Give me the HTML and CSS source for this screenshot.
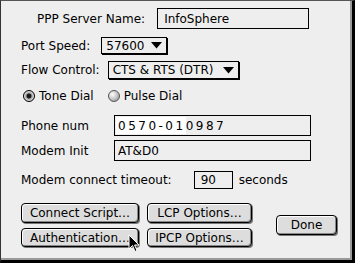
FILE: index.html
```html
<!doctype html>
<html>
    <head>
        <title>PPP Setup</title>
        <link rel="stylesheet" href="styles.css">
    </head>
    <body>
        <div class="window">
            <div class="pane">
                <div class="row row-server">
                    <span class="label">PPP Server Name:</span>
                    <div class="field field-server">InfoSphere</div>
                </div>
                <div class="row row-speed">
                    <span class="label">Port Speed:</span>
                    <div class="popup popup-speed">57600 <svg class="arrow" width="11" height="7" viewBox="0 0 11 7"><path d="M0 0H11L5.5 6.5Z" fill="#000"/></svg></div>
                </div>
                <div class="row row-flow">
                    <span class="label">Flow Control:</span>
                    <div class="popup popup-flow">CTS &amp; RTS (DTR) <svg class="arrow" width="11" height="7" viewBox="0 0 11 7"><path d="M0 0H11L5.5 6.5Z" fill="#000"/></svg></div>
                </div>
                <div class="row row-dial">
                    <label class="radio"><span class="dot on"></span>Tone Dial</label>
                    <label class="radio"><span class="dot"></span>Pulse Dial</label>
                </div>
                <div class="row row-phone">
                    <span class="label label-wide">Phone num</span>
                    <div class="field field-long field-phone"><span class="typed">0570-01</span><span class="digits">0987</span></div>
                </div>
                <div class="row row-init">
                    <span class="label label-wide">Modem Init</span>
                    <div class="field field-long">AT&amp;D0</div>
                </div>
                <div class="row row-timeout">
                    <span class="label">Modem connect timeout:</span>
                    <div class="field field-small">90</div>
                    <span class="label">seconds</span>
                </div>
                <div class="buttons">
                    <div class="button-grid">
                        <div class="button btn-wide">Connect Script…</div>
                        <div class="button btn-mid">LCP Options…</div>
                        <div class="button btn-wide btn-low">Authentication…</div>
                        <div class="button btn-mid btn-low">IPCP Options…</div>
                    </div>
                    <div class="button btn-done">Done</div>
                </div>
            </div>
            <svg class="cursor" width="13" height="19" viewBox="0 0 13 19">
                <path d="M1 1V15L4.5 11.5L7 17.5L9 16.6L6.6 11H11Z" fill="#000" stroke="#fff" stroke-width="1"/>
            </svg>
        </div>
    </body>
</html>
```

FILE: styles.css
```css
body {
    margin: 0;
    background: #000;
}
.window {
    position: relative;
    width: 355px;
    height: 263px;
    box-sizing: border-box;
    background: #eeeeee;
    border-left: 1px solid #333;
    border-top: 1px solid #555;
    border-right: 3px solid #000;
    border-bottom: 3px solid #000;
    font-family: "DejaVu Sans", Verdana, sans-serif;
    font-size: 12px;
    color: #000;
    overflow: hidden;
}
.pane {
    height: 100%;
    box-sizing: border-box;
    padding: 7px 0 0 20px;
    box-shadow: inset -2px -2px 0 #999;
}
.row {
    display: flex;
    align-items: center;
}
.row-server {
    padding-left: 16px;
    height: 21px;
}
.row-server .label {
    margin-right: 12px;
}
.field {
    box-sizing: border-box;
    border: 1px solid #000;
    height: 21px;
    padding-left: 6px;
    display: flex;
    align-items: center;
}
.field-server {
    width: 152px;
}
.row-speed {
    margin-top: 8px;
    height: 17px;
}
.row-speed .label {
    margin-right: 11px;
}
.popup {
    box-sizing: border-box;
    height: 17px;
    border: 1px solid #000;
    box-shadow: 1px 1px 0 #000;
    padding: 0 4px;
    display: flex;
    align-items: center;
    justify-content: space-between;
}
.popup-speed {
    width: 66px;
}
.row-flow {
    margin-top: 7px;
    height: 18px;
}
.row-flow .label {
    margin-right: 8px;
}
.popup-flow {
    width: 131px;
    height: 18px;
}
.arrow {
    margin-left: 4px;
}
.row-dial {
    margin-top: 10px;
    height: 14px;
    padding-left: 2px;
}
.radio {
    display: flex;
    align-items: center;
    margin-right: 14px;
}
.dot {
    box-sizing: border-box;
    width: 12px;
    height: 12px;
    border-radius: 50%;
    border: 1px solid #555;
    background: radial-gradient(circle at 35% 35%, #fff 0, #ccc 45%, #888 100%);
    margin-right: 4px;
}
.dot.on {
    border: 1px solid #000;
    background: radial-gradient(circle, #111 0, #222 30%, #999 40%, #ddd 65%, #666 100%);
}
.row-phone {
    margin-top: 12px;
    height: 21px;
}
.label-wide {
    width: 93px;
}
.field-long {
    width: 197px;
    padding-left: 3px;
}
.field-phone {
    align-items: stretch;
    padding: 1px 0 1px 1px;
    letter-spacing: 2.5px;
}
.field-phone span {
    display: flex;
    align-items: center;
}
.typed {
    background: #fff;
    padding-left: 2px;
}
.row-init {
    margin-top: 4px;
    height: 21px;
}
.row-timeout {
    margin-top: 10px;
    height: 18px;
}
.field-small {
    width: 39px;
    height: 18px;
    margin: 0 6px 0 22px;
}
.buttons {
    display: flex;
    align-items: center;
    margin-top: 14px;
}
.button-grid {
    display: grid;
    grid-template-columns: 118px 105px;
    column-gap: 8px;
    row-gap: 5px;
}
.button {
    box-sizing: border-box;
    height: 20px;
    border: 1px solid #000;
    border-radius: 4px;
    background: #dddddd;
    box-shadow: inset -1px -1px 0 #888, inset 1px 1px 0 #fff, 1px 1px 0 #777;
    display: flex;
    align-items: center;
    justify-content: center;
}
.btn-low {
    height: 19px;
}
.btn-done {
    width: 61px;
    margin-left: 24px;
}
.cursor {
    position: absolute;
    left: 127px;
    top: 233px;
}
```
